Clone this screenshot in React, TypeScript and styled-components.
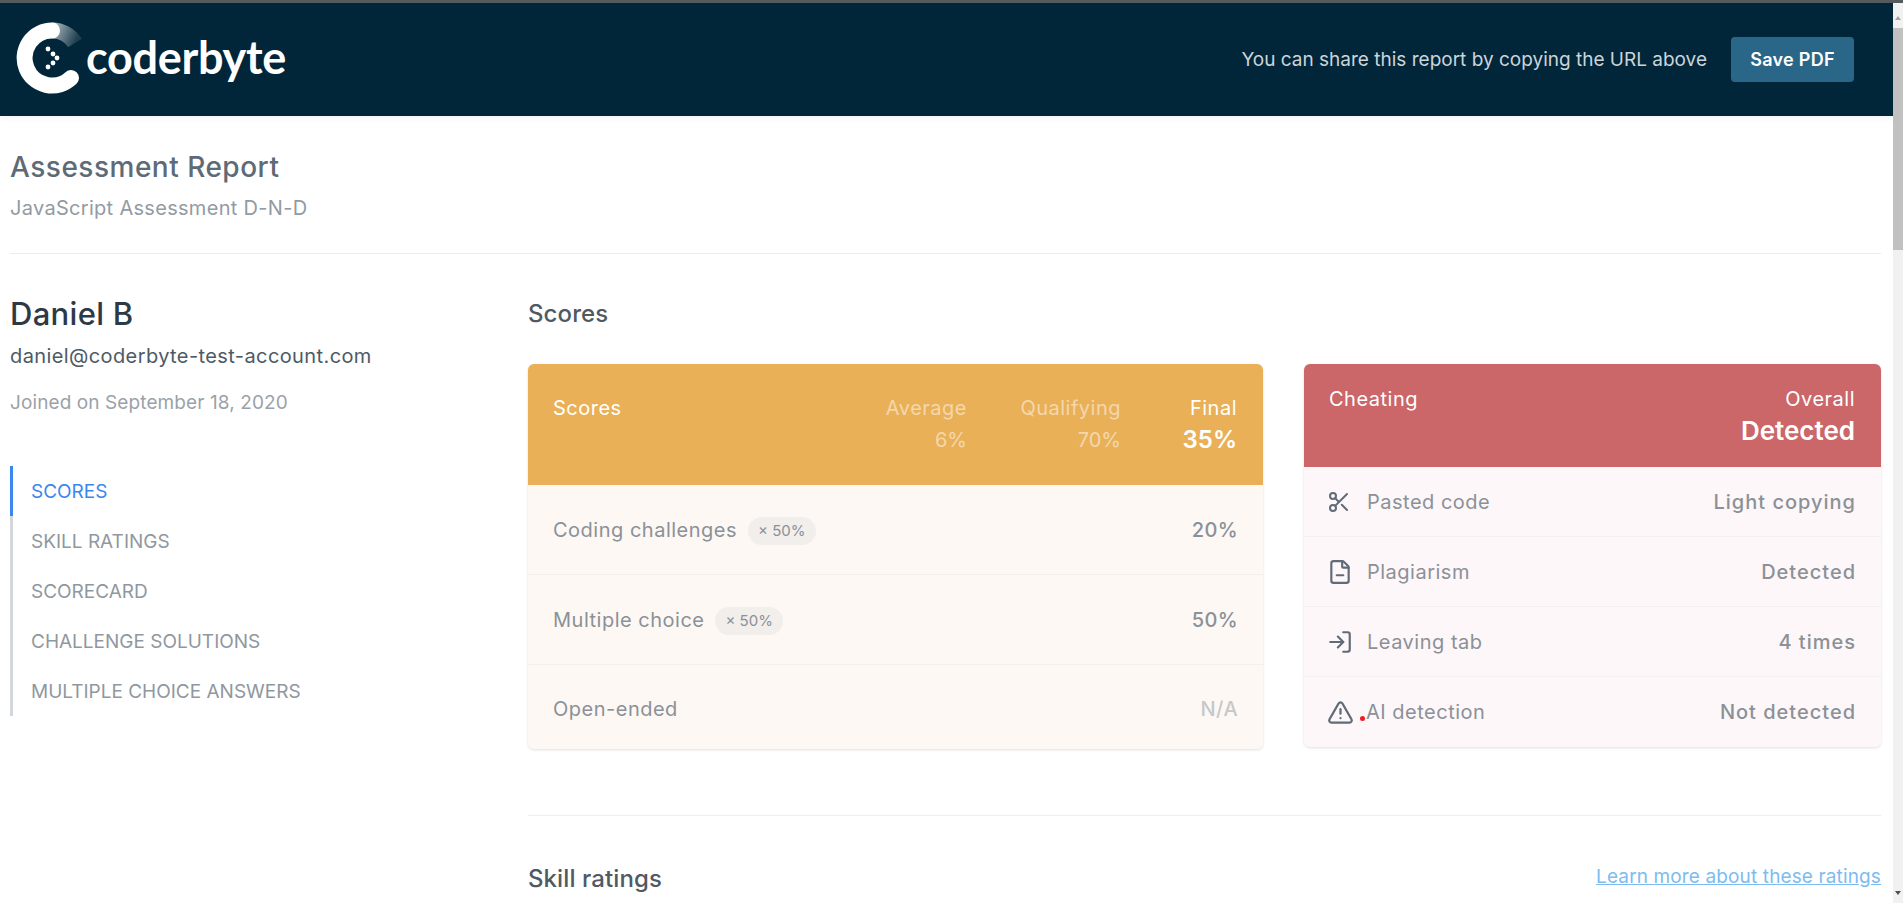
import styled, { createGlobalStyle } from 'styled-components';
import { FileMinus, LogIn, Scissors, TriangleAlert } from 'lucide-react';

const scoreRows = [
  { name: 'Coding challenges', weight: '× 50%', value: '20%' },
  { name: 'Multiple choice', weight: '× 50%', value: '50%' },
  { name: 'Open-ended', value: 'N/A', muted: true },
];

const cheatRows = [
  { icon: <Scissors size={24} strokeWidth={2} />, name: 'Pasted code', value: 'Light copying' },
  { icon: <FileMinus size={26} strokeWidth={2} />, name: 'Plagiarism', value: 'Detected' },
  { icon: <LogIn size={26} strokeWidth={2} />, name: 'Leaving tab', value: '4 times' },
  { icon: <TriangleAlert size={27} strokeWidth={2} />, name: 'AI detection', value: 'Not detected', dot: true },
];

const navItems = ['Scores', 'Skill ratings', 'Scorecard', 'Challenge solutions', 'Multiple choice answers'];

function LogoMark() {
  return (
    <svg width="72" height="72" viewBox="0 0 72 72">
      <defs>
        <linearGradient id="fade" gradientUnits="userSpaceOnUse" x1="30" y1="0" x2="62" y2="14">
          <stop offset="0" stopColor="#fff" stopOpacity="0.85" />
          <stop offset="1" stopColor="#fff" stopOpacity="0.12" />
        </linearGradient>
      </defs>
      <path d="M36 8.5 A27 27 0 0 1 59 21" fill="none" stroke="url(#fade)" strokeWidth="16" />
      <path d="M36 8.5 A27.5 27.5 0 1 0 55 56" fill="none" stroke="#fff" strokeWidth="16" strokeLinecap="round" />
      <circle cx="32" cy="27" r="2.4" fill="#fff" />
      <circle cx="37" cy="32" r="2.4" fill="#fff" />
      <circle cx="41" cy="36" r="2.4" fill="#fff" />
      <circle cx="37" cy="41" r="2.4" fill="#fff" />
      <circle cx="32" cy="45" r="2.4" fill="#fff" />
    </svg>
  );
}

export default function App() {
  return (
    <>
      <GlobalStyle />
      <TopStrip />
      <Window>
        <Page>
          <Header>
            <Logo>
              <LogoMark />
              <LogoText>coderbyte</LogoText>
            </Logo>
            <HeaderRight>
              <ShareText>You can share this report by copying the URL above</ShareText>
              <SaveButton>Save PDF</SaveButton>
            </HeaderRight>
          </Header>

          <Content>
            <TitleBlock>
              <Title>Assessment Report</Title>
              <Subtitle>JavaScript Assessment D-N-D</Subtitle>
            </TitleBlock>

            <Columns>
              <Sidebar>
                <Name>Daniel B</Name>
                <Email>daniel@coderbyte-test-account.com</Email>
                <Joined>Joined on September 18, 2020</Joined>
                <Nav>
                  {navItems.map((item, i) => (
                    <NavItem key={item} $active={i === 0}>{item}</NavItem>
                  ))}
                </Nav>
              </Sidebar>

              <Main>
                <SectionTitle>Scores</SectionTitle>
                <Cards>
                  <ScoreCard>
                    <ScoreHead>
                      <HeadLabel>Scores</HeadLabel>
                      <HeadCol $width={154} $faded>
                        <span>Average</span>
                        <HeadValue>6%</HeadValue>
                      </HeadCol>
                      <HeadCol $width={154} $faded>
                        <span>Qualifying</span>
                        <HeadValue>70%</HeadValue>
                      </HeadCol>
                      <HeadCol $width={116}>
                        <span>Final</span>
                        <HeadValue $size={24}>35%</HeadValue>
                      </HeadCol>
                    </ScoreHead>
                    {scoreRows.map((row, i) => (
                      <ScoreRow key={row.name} $last={i === scoreRows.length - 1}>
                        <RowName>{row.name}</RowName>
                        {row.weight && <Weight>{row.weight}</Weight>}
                        <ScoreValue $muted={row.muted}>{row.value}</ScoreValue>
                      </ScoreRow>
                    ))}
                  </ScoreCard>

                  <CheatCard>
                    <CheatHead>
                      <HeadLabel>Cheating</HeadLabel>
                      <CheatOverall>
                        <span>Overall</span>
                        <HeadValue $size={26}>Detected</HeadValue>
                      </CheatOverall>
                    </CheatHead>
                    {cheatRows.map((row) => (
                      <CheatRow key={row.name}>
                        <IconSlot>{row.icon}</IconSlot>
                        {row.dot && <RedDot />}
                        <RowName>{row.name}</RowName>
                        <CheatValue>{row.value}</CheatValue>
                      </CheatRow>
                    ))}
                  </CheatCard>
                </Cards>

                <Rule />
                <SkillRow>
                  <SectionTitle>Skill ratings</SectionTitle>
                  <LearnLink href="#">Learn more about these ratings</LearnLink>
                </SkillRow>
              </Main>
            </Columns>
          </Content>
        </Page>

        <Scrollbar>
          <ArrowUp />
          <Thumb />
          <ArrowDown />
        </Scrollbar>
      </Window>
    </>
  );
}

const GlobalStyle = createGlobalStyle`
  html, body {
    margin: 0;
    height: 100%;
    overflow: hidden;
    background: #fff;
  }
  body {
    font-family: "Inter", "Open Sans", sans-serif;
  }
  * {
    box-sizing: border-box;
  }
`;

const TopStrip = styled.div`
  height: 3px;
  background: #555a5e;
`;

const Window = styled.div`
  display: flex;
  height: 900px;
`;

const Page = styled.div`
  flex: 1;
  min-width: 0;
  overflow: hidden;
`;

const Scrollbar = styled.div`
  width: 10px;
  display: flex;
  flex-direction: column;
  align-items: center;
  background: #f1f1f1;
`;

const ArrowUp = styled.div`
  margin-top: 13px;
  border-left: 3px solid transparent;
  border-right: 3px solid transparent;
  border-bottom: 4px solid #a3a3a3;
`;

const ArrowDown = styled.div`
  margin-top: auto;
  margin-bottom: 8px;
  border-left: 3px solid transparent;
  border-right: 3px solid transparent;
  border-top: 4px solid #505050;
`;

const Thumb = styled.div`
  width: 10px;
  height: 222px;
  margin-top: 8px;
  background: #c1c1c1;
`;

const Header = styled.header`
  height: 113px;
  display: flex;
  align-items: center;
  justify-content: space-between;
  padding: 0 39px 0 16px;
  background: #012639;
  box-shadow: 0 2px 6px rgba(60, 90, 200, 0.08);
`;

const Logo = styled.div`
  display: flex;
  align-items: center;

  svg {
    margin-bottom: 3px;
  }
`;

const LogoText = styled.span`
  margin-left: -2px;
  margin-bottom: 4px;
  font-family: "Lato", sans-serif;
  font-size: 45px;
  font-weight: 700;
  line-height: 1;
  letter-spacing: -0.3px;
  color: #fff;
`;

const HeaderRight = styled.div`
  display: flex;
  align-items: center;
  gap: 24px;
`;

const ShareText = styled.span`
  font-size: 19px;
  color: #ccd4d9;
`;

const SaveButton = styled.button`
  width: 123px;
  height: 45px;
  border: 0;
  border-radius: 4px;
  background: #2a6687;
  color: #fff;
  font-family: inherit;
  font-size: 18px;
  font-weight: 600;
  letter-spacing: 0.3px;
`;

const Content = styled.div`
  padding: 0 12px 0 10px;
`;

const TitleBlock = styled.div`
  padding: 35px 0 33px;
  border-bottom: 1px solid #ececec;
`;

const Title = styled.h1`
  margin: 0;
  font-size: 28px;
  line-height: 32px;
  font-weight: 500;
  letter-spacing: 0.5px;
  color: #5e6b76;
`;

const Subtitle = styled.div`
  margin-top: 13px;
  font-size: 20px;
  line-height: 24px;
  letter-spacing: 0.3px;
  color: #929ba3;
`;

const Columns = styled.div`
  display: flex;
`;

const Sidebar = styled.aside`
  width: 518px;
  flex: none;
  padding-top: 42px;
`;

const Name = styled.div`
  font-size: 31px;
  line-height: 36px;
  font-weight: 500;
  letter-spacing: 0.3px;
  color: #2c3a47;
`;

const Email = styled.div`
  margin-top: 12px;
  font-size: 20px;
  line-height: 24px;
  letter-spacing: 0.4px;
  color: #4d5a65;
`;

const Joined = styled.div`
  margin-top: 23px;
  font-size: 19px;
  line-height: 24px;
  letter-spacing: 0.1px;
  color: #9aa2a9;
`;

const Nav = styled.nav`
  margin-top: 51px;
`;

const NavItem = styled.div<{ $active?: boolean }>`
  height: 50px;
  display: flex;
  align-items: center;
  padding: 1px 0 0 18px;
  border-left: 3px solid ${(p) => (p.$active ? '#3b87f0' : '#d3d7db')};
  font-size: 19px;
  text-transform: uppercase;
  color: ${(p) => (p.$active ? '#3b87f0' : '#8f98a0')};
`;

const Main = styled.main`
  flex: 1;
  min-width: 0;
  padding-top: 46px;
`;

const SectionTitle = styled.h2`
  margin: 0;
  font-size: 24px;
  line-height: 28px;
  font-weight: 500;
  letter-spacing: 0.1px;
  color: #4f5a64;
`;

const Cards = styled.div`
  display: flex;
  align-items: flex-start;
  gap: 41px;
  margin-top: 36px;
`;

const Card = styled.section`
  border-radius: 6px;
  overflow: hidden;
  box-shadow: 0 1px 3px rgba(0, 0, 0, 0.12);
  font-size: 20px;
  letter-spacing: 0.5px;
`;

const ScoreCard = styled(Card)`
  width: 735px;
  background: #fdf8f4;
`;

const CheatCard = styled(Card)`
  width: 577px;
  background: #fdf7f9;
`;

const ScoreHead = styled.div`
  height: 121px;
  display: flex;
  padding: 32px 26px 0 25px;
  background: #e9b058;
  color: #fff;
`;

const CheatHead = styled.div`
  height: 103px;
  display: flex;
  justify-content: space-between;
  padding: 23px 26px 0 25px;
  background: #cb6669;
  color: #fff;
`;

const HeadLabel = styled.div`
  flex: 1;
  line-height: 24px;
`;

const HeadCol = styled.div<{ $width: number; $faded?: boolean }>`
  width: ${(p) => p.$width}px;
  display: flex;
  flex-direction: column;
  align-items: flex-end;
  line-height: 24px;
  color: ${(p) => (p.$faded ? 'rgba(255, 255, 255, 0.5)' : '#fff')};
`;

const CheatOverall = styled.div`
  display: flex;
  flex-direction: column;
  align-items: flex-end;
  line-height: 24px;
`;

const HeadValue = styled.span<{ $size?: number }>`
  margin-top: 8px;
  font-size: ${(p) => p.$size ?? 20}px;
  font-weight: ${(p) => (p.$size ? 600 : 400)};
  letter-spacing: 0;
`;

const ScoreRow = styled.div<{ $last?: boolean }>`
  height: ${(p) => (p.$last ? '84px' : '90px')};
  display: flex;
  align-items: center;
  padding: ${(p) => (p.$last ? '4px' : '0')} 26px 0 25px;
  border-bottom: ${(p) => (p.$last ? '0' : '1px solid #f4efeb')};
`;

const RowName = styled.span`
  color: #8b9197;
`;

const Weight = styled.span`
  margin: 2px 0 0 11px;
  padding: 0 10px;
  height: 28px;
  display: inline-flex;
  align-items: center;
  border-radius: 14px;
  background: #f1eeec;
  font-size: 15px;
  letter-spacing: 0;
  color: #8b9197;
`;

const ScoreValue = styled.span<{ $muted?: boolean }>`
  margin: 0 -1px 0 auto;
  font-weight: 500;
  letter-spacing: 0.4px;
  color: ${(p) => (p.$muted ? '#c6c8c9' : '#8b9197')};
`;

const CheatRow = styled.div`
  height: 70px;
  display: flex;
  align-items: center;
  padding: 0 26px 0 25px;
  border-bottom: 1px solid #f4eff1;

  &:last-child {
    border-bottom: 0;
  }
`;

const IconSlot = styled.span`
  width: 40px;
  margin-left: -2px;
  flex: none;
  display: flex;
  color: #5f6b76;
`;

const RedDot = styled.span`
  width: 5px;
  height: 5px;
  margin: 12px 1px 0 -7px;
  border-radius: 50%;
  background: #ee1c25;
`;

const CheatValue = styled.span`
  margin: 0 -1px 0 auto;
  font-weight: 500;
  letter-spacing: 1px;
  color: #8b9197;
`;

const Rule = styled.hr`
  margin: 66px 0 0;
  border: 0;
  border-top: 1px solid #eeeeee;
`;

const SkillRow = styled.div`
  margin-top: 49px;
  display: flex;
  align-items: center;
  justify-content: space-between;
`;

const LearnLink = styled.a`
  margin-bottom: 5px;
  font-size: 19px;
  letter-spacing: 0.13px;
  color: #7cbcf0;
`;
